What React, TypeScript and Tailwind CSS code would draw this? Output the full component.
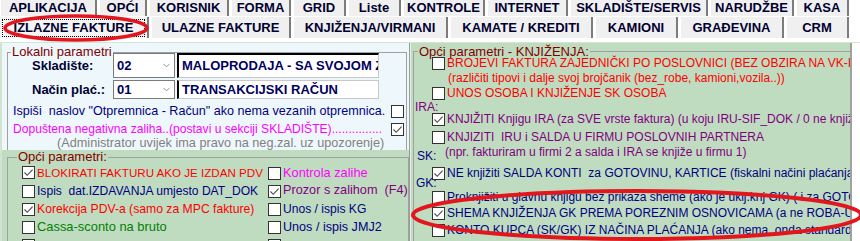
import React from 'react';
import { ChevronDown } from 'lucide-react';

const topTabs: [string, string][] = [
  ['APLIKACIJA', 'w-[97px]'],
  ['OPĆI', 'w-[48px]'],
  ['KORISNIK', 'w-[80px]'],
  ['FORMA', 'w-[60px]'],
  ['GRID', 'w-[53px]'],
  ['Liste', 'w-[53px]'],
  ['KONTROLE', 'w-[82px]'],
  ['INTERNET', 'w-[81px]'],
  ['SKLADIŠTE/SERVIS', 'w-[138px]'],
  ['NARUDŽBE', 'w-[84px]'],
  ['KASA', 'w-[53px]'],
];

const subTabs: [string, string][] = [
  ['ULAZNE FAKTURE', 'w-[140px]'],
  ['KNJIŽENJA/VIRMANI', 'w-[155px]'],
  ['KAMATE / KREDITI', 'w-[143px]'],
  ['KAMIONI', 'w-[83px]'],
  ['GRAĐEVINA', 'w-[104px]'],
  ['CRM', 'w-[63px]'],
];

// left "Opći parametri" grid: text, colour+size, checked (two columns per row)
const generalRows: [string, string, boolean, string, string, boolean][] = [
  ['BLOKIRATI FAKTURU AKO JE IZDAN PDV', 'text-[#ff0000] text-[11.6px]', true, 'Kontrola zalihe', 'text-[#ff00ff] text-[12.8px]', false],
  ['Ispis  dat.IZDAVANJA umjesto DAT_DOK', 'text-[#000080] text-[12.1px]', false, 'Prozor s zalihom  (F4)', 'text-[#800080] text-[12.7px]', true],
  ['Korekcija PDV-a (samo za MPC fakture)', 'text-[#ff0000] text-[12.2px]', true, 'Unos / ispis KG', 'text-[#000080] text-[12.1px]', false],
  ['Cassa-sconto na bruto', 'text-[#008000] text-[12.9px]', false, 'Unos / ispis JMJ2', 'text-[#000080] text-[12.6px]', false],
  ['', '', false, '', '', false],
];

const Box: React.FC<{ checked?: boolean }> = ({ checked }) => (
  <span className="flex h-[13px] w-[13px] shrink-0 items-center justify-center border border-[#333333] bg-white">
    {checked && (
      <svg width="11" height="11" viewBox="0 0 11 11">
        <path d="M1.5 5.5 4.2 8.3 9.6 2.6" fill="none" stroke="#4a4a4a" strokeWidth="1.1" />
      </svg>
    )}
  </span>
);

interface OptProps {
  text?: string;
  color: string;
  checked?: boolean;
  className?: string;
}

const Opt: React.FC<OptProps> = ({ text, color, checked, className = '' }) => (
  <div className={`flex h-[14px] items-center gap-[2px] pl-[18px] whitespace-pre ${className}`}>
    <Box checked={checked} />
    {text && <span className={`text-[12px] leading-[14px] ${color}`}>{text}</span>}
  </div>
);

const Tab: React.FC<{ label: string; w: string }> = ({ label, w }) => (
  <div
    className={`${w} flex h-full shrink-0 items-center justify-center border-l border-l-white border-r-2 border-r-[#7c7c7c] bg-[#f0f0f0] text-[13px] font-bold text-[#000030]`}
  >
    {label}
  </div>
);

export default function App() {
  return (
    <div className="relative h-[241px] w-[860px] overflow-hidden bg-white font-['Liberation_Sans',Arial,sans-serif]">
      {/* tab rows */}
      <div className="flex h-[16px] gap-[2px]">
        {topTabs.map(([label, w]) => (
          <Tab key={label} label={label} w={w} />
        ))}
      </div>
      <div className="mt-[1px] flex h-[21px] gap-[2px]">
        <div className="flex w-[149px] shrink-0 items-center justify-center border-r-2 border-r-[#7c7c7c] bg-[#f4f4f4]">
          <div className="flex h-[18px] w-[143px] items-center justify-center border border-dotted border-black text-[13px] font-bold text-[#000030]">
            IZLAZNE FAKTURE
          </div>
        </div>
        {subTabs.map(([label, w]) => (
          <Tab key={label} label={label} w={w} />
        ))}
      </div>

      {/* content */}
      <div className="mt-[4px] flex h-[200px] border-t border-t-[#d2e6d2]">
        {/* left */}
        <div className="flex w-[410px] shrink-0 flex-col border-l-2 border-l-[#d0e4d0] border-r border-r-[#9a9a9a]">
          <div className="h-[107px] bg-[#eef8fc] pl-[5px] pr-[2px] pt-[3px]">
            <fieldset className="h-full border border-b-0 border-[#a0a0a0]">
              <legend className="ml-[3px] px-[1px] text-[13px] leading-[12px] text-[#800000]">Lokalni parametri</legend>
              <div className="-mt-[5px] flex h-[25px] items-center">
                <span className="w-[105px] pl-[24px] text-[13px] font-bold text-[#000033]">Skladište:</span>
                <div className="flex h-full w-[62px] items-center justify-between border border-[#7a7a7a] bg-white pl-[3px] pr-[2px]">
                  <span className="text-[13px] font-bold text-[#000060]">02</span>
                  <ChevronDown size={11} strokeWidth={1.5} className="text-[#666666]" />
                </div>
                <div className="ml-[2px] flex h-full w-[202px] items-center overflow-hidden whitespace-nowrap border-b border-l-2 border-r border-t-2 border-b-[#c8c8c8] border-l-black border-r-[#c8c8c8] border-t-black bg-white pl-[3px] text-[13px] font-bold text-[#000060]">
                  MALOPRODAJA - SA SVOJOM ZALIHOM
                </div>
              </div>
              <div className="mt-[2px] flex h-[19px] items-center">
                <span className="w-[105px] pl-[24px] text-[13px] font-bold text-[#000033]">Način plać.:</span>
                <div className="flex h-full w-[62px] items-center justify-between border border-[#7a7a7a] bg-white pl-[3px] pr-[2px]">
                  <span className="text-[13px] font-bold text-[#000060]">01</span>
                  <ChevronDown size={11} strokeWidth={1.5} className="text-[#666666]" />
                </div>
                <div className="ml-[2px] flex h-full w-[202px] items-center overflow-hidden whitespace-nowrap border border-l-2 border-[#c8c8c8] border-l-black bg-white pl-[3px] text-[13px] font-bold text-[#000060]">
                  TRANSAKCIJSKI RAČUN
                </div>
              </div>
              <div className="mt-[3px] flex h-[18px] items-center whitespace-pre pl-[5px] pr-[2px]">
                <span className="text-[12.6px] text-[#000080]">Ispiši  naslov "Otpremnica - Račun" ako nema vezanih otpremnica.</span>
                <span className="ml-auto">
                  <Box />
                </span>
              </div>
              <div className="flex h-[18px] items-center whitespace-pre pl-[5px] pr-[2px]">
                <span className="text-[12.1px] text-[#ff00ff]">Dopuštena negativna zaliha..(postavi u sekciji SKLADIŠTE)...............</span>
                <span className="ml-auto">
                  <Box checked />
                </span>
              </div>
              <div className="flex h-[12px] items-center whitespace-pre pl-[49px] text-[12.7px] text-[#808080]">
                (Administrator uvijek ima pravo na neg.zal. uz upozorenje)
              </div>
            </fieldset>
          </div>
          <div className="flex-1 bg-[#c0dcc0] pl-[5px] pr-[2px] pt-[1px]">
            <fieldset className="h-[120px] border border-[#a0a0a0]">
              <legend className="ml-[9px] px-[1px] text-[13px] leading-[12px] text-[#800000]">Opći parametri:</legend>
              {generalRows.map(([t1, c1, k1, t2, c2, k2], i) => (
                <div key={i} className={`flex h-[18px] items-center whitespace-pre ${i === 0 ? 'mt-[1px]' : ''}`}>
                  <div className="flex w-[260px] items-center gap-[2px] pl-[14px]">
                    <Box checked={k1} />
                    <span className={c1}>{t1}</span>
                  </div>
                  <div className="flex items-center gap-[2px]">
                    <Box checked={k2} />
                    <span className={c2}>{t2}</span>
                  </div>
                </div>
              ))}
            </fieldset>
          </div>
        </div>

        {/* right */}
        <div className="w-[442px] shrink-0 overflow-hidden border-l border-l-[#e4f1e4] border-r-2 border-r-[#a0a0a0] bg-[#c0dcc0] pl-[2px] pt-[3px]">
          <fieldset className="h-[230px] w-[480px] border border-[#a0a0a0]">
            <legend className="ml-[4px] px-[1px] text-[13px] leading-[11px] text-[#800000]">Opći parametri - KNJIŽENJA:</legend>
            <Opt className="-mt-[1px]" color="text-[#ff0000]" text="BROJEVI FAKTURA ZAJEDNIČKI PO POSLOVNICI (BEZ OBZIRA NA VK-IFA)" />
            <div className="mt-[1px] flex h-[14px] items-center whitespace-pre pl-[34px] text-[12px] text-[#ff0000]">
              (različiti tipovi i dalje svoj brojčanik (bez_robe, kamioni,vozila..))
            </div>
            <Opt className="mt-[1px]" color="text-[#ff0000]" text="UNOS OSOBA I KNJIŽENJE SK OSOBA" />
            <div className="flex h-[14px] items-center pl-[1px] text-[12px] text-[#800080]">IRA:</div>
            <Opt className="-mt-[2px]" checked color="text-[#800080]" text="KNJIŽITI Knjigu IRA (za SVE vrste faktura) (u koju IRU-SIF_DOK / 0 ne knjiži)" />
            <Opt className="mt-[4px]" color="text-[#800080]" text="KNJIZITI  IRU i SALDA U FIRMU POSLOVNIH PARTNERA" />
            <div className="mt-[1px] flex h-[14px] items-start whitespace-pre text-[12px] leading-[14px]">
              <span className="mt-[4px] w-[31px] pl-[3px] text-[#000080]">SK:</span>
              <span className="text-[#800080]">(npr. fakturiram u firmi 2 a salda i IRA se knjiže u firmu 1)</span>
            </div>
            <Opt className="mt-[7px]" checked color="text-[#000080]" text="NE knjižiti SALDA KONTI  za GOTOVINU, KARTICE (fiskalni načini plaćanja)" />
            <div className="-mt-[4px] flex h-[14px] items-center pl-[2px] text-[12px] text-[#000080]">GK:</div>
            <Opt color="text-[#000080]" text="Proknjižiti u glavnu knjigu bez prikaza sheme (ako je uklj.knj GK) ( i za GOTOVINU)" />
            <Opt className="mt-[2px]" checked color="text-[#000080]" text="SHEMA KNJIŽENJA GK PREMA POREZNIM OSNOVICAMA (a ne ROBA-USLUGE)" />
            <Opt className="mt-[3px]" color="text-[#000080]" text="KONTO KUPCA (SK/GK) IZ NAČINA PLAĆANJA (ako nema, onda standardni)" />
            <Opt className="mt-[3px]" color="text-[#000080]" />
          </fieldset>
        </div>
      </div>

      {/* red annotation rings */}
      <svg className="pointer-events-none absolute inset-0" width="860" height="241" viewBox="0 0 860 241">
        <ellipse cx="76" cy="28" rx="71" ry="12" fill="none" stroke="#e3161e" strokeWidth="3.5" />
        <ellipse cx="637" cy="215" rx="224" ry="24" fill="none" stroke="#e3161e" strokeWidth="4" />
      </svg>
    </div>
  );
}
